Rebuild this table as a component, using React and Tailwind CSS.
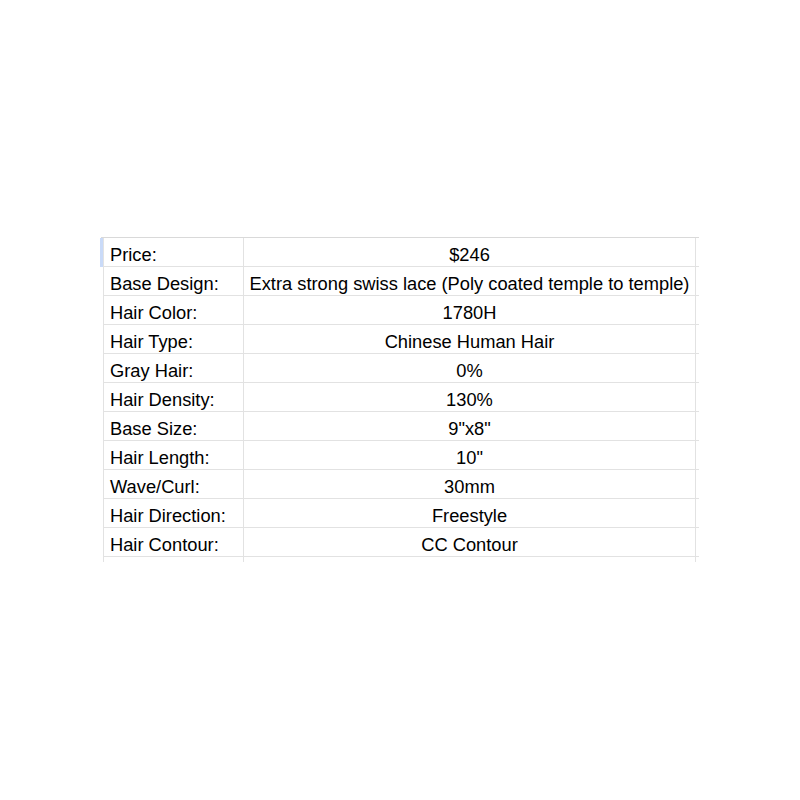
const rows = [
  ['Price:', '$246'],
  ['Base Design:', 'Extra strong swiss lace (Poly coated temple to temple)'],
  ['Hair Color:', '1780H'],
  ['Hair Type:', 'Chinese Human Hair'],
  ['Gray Hair:', '0%'],
  ['Hair Density:', '130%'],
  ['Base Size:', '9"x8"'],
  ['Hair Length:', '10"'],
  ['Wave/Curl:', '30mm'],
  ['Hair Direction:', 'Freestyle'],
  ['Hair Contour:', 'CC Contour'],
]

export default function App() {
  return (
    <div
      className="min-h-[800px] bg-white pl-[100px] pt-[237px] text-black"
      style={{ fontFamily: '"Liberation Sans", Arial, sans-serif' }}
    >
      <div className="w-[599px]">
        <div className="ml-[1px] h-px w-[598px] bg-[#d9d9d9]" />
        {rows.map(([label, value], i) => (
          <div key={label} className="flex h-[29px]">
            <div className={`w-[3px] ${i === 0 ? 'bg-[#c9daf8]' : ''}`} />
            <div className="flex w-[141px] items-center border-b border-l border-r border-[#e2e2e2] pl-[6px] pt-[6px] text-[18.3px] leading-none">
              {label}
            </div>
            <div className="flex w-[452px] items-center justify-center whitespace-nowrap border-b border-r border-[#e2e2e2] pt-[6px] text-[18.3px] leading-none">
              {value}
            </div>
            <div className="w-[3px] border-b border-[#e2e2e2]" />
          </div>
        ))}
        <div className="flex h-[5px]">
          <div className="w-[3px]" />
          <div className="w-[141px] border-l border-r border-[#e2e2e2]" />
          <div className="w-[452px] border-r border-[#e2e2e2]" />
        </div>
      </div>
    </div>
  )
}
